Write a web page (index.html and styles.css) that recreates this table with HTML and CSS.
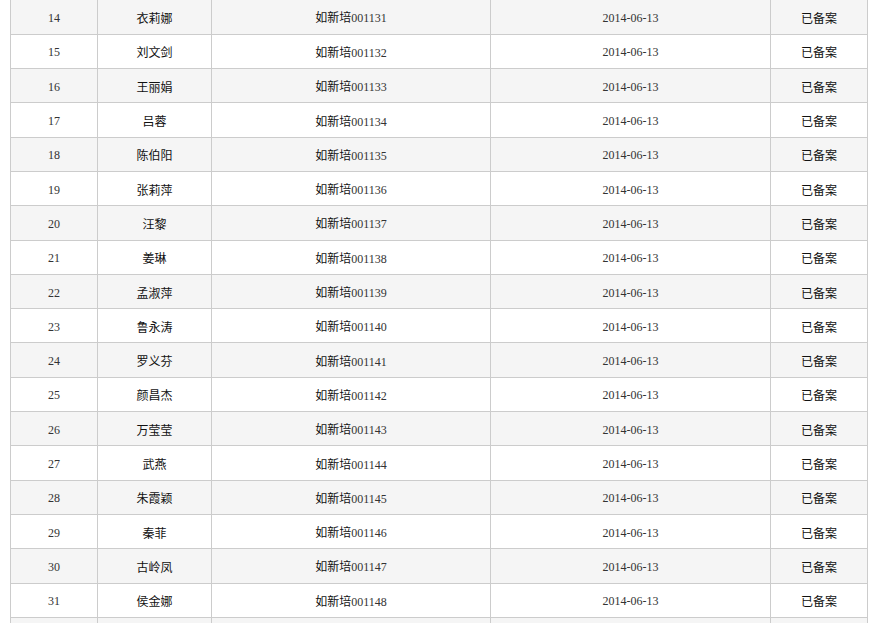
FILE: index.html
```html
<!DOCTYPE html>
<html lang="zh-CN">
<head>
<meta charset="utf-8">
<title>备案列表</title>
<link rel="stylesheet" href="styles.css">
</head>
<body>
<div class="wrap">
<table class="list">
<colgroup>
<col class="c-no"><col class="c-name"><col class="c-code"><col class="c-date"><col class="c-state">
</colgroup>
<tbody>
<tr class="odd"><td>14</td><td class="cn">衣莉娜</td><td><span class="cn">如新培</span>001131</td><td>2014-06-13</td><td class="cn">已备案</td></tr>
<tr><td>15</td><td class="cn">刘文剑</td><td><span class="cn">如新培</span>001132</td><td>2014-06-13</td><td class="cn">已备案</td></tr>
<tr class="odd"><td>16</td><td class="cn">王丽娟</td><td><span class="cn">如新培</span>001133</td><td>2014-06-13</td><td class="cn">已备案</td></tr>
<tr><td>17</td><td class="cn">吕蓉</td><td><span class="cn">如新培</span>001134</td><td>2014-06-13</td><td class="cn">已备案</td></tr>
<tr class="odd"><td>18</td><td class="cn">陈伯阳</td><td><span class="cn">如新培</span>001135</td><td>2014-06-13</td><td class="cn">已备案</td></tr>
<tr><td>19</td><td class="cn">张莉萍</td><td><span class="cn">如新培</span>001136</td><td>2014-06-13</td><td class="cn">已备案</td></tr>
<tr class="odd"><td>20</td><td class="cn">汪黎</td><td><span class="cn">如新培</span>001137</td><td>2014-06-13</td><td class="cn">已备案</td></tr>
<tr><td>21</td><td class="cn">姜琳</td><td><span class="cn">如新培</span>001138</td><td>2014-06-13</td><td class="cn">已备案</td></tr>
<tr class="odd"><td>22</td><td class="cn">孟淑萍</td><td><span class="cn">如新培</span>001139</td><td>2014-06-13</td><td class="cn">已备案</td></tr>
<tr><td>23</td><td class="cn">鲁永涛</td><td><span class="cn">如新培</span>001140</td><td>2014-06-13</td><td class="cn">已备案</td></tr>
<tr class="odd"><td>24</td><td class="cn">罗义芬</td><td><span class="cn">如新培</span>001141</td><td>2014-06-13</td><td class="cn">已备案</td></tr>
<tr><td>25</td><td class="cn">颜昌杰</td><td><span class="cn">如新培</span>001142</td><td>2014-06-13</td><td class="cn">已备案</td></tr>
<tr class="odd"><td>26</td><td class="cn">万莹莹</td><td><span class="cn">如新培</span>001143</td><td>2014-06-13</td><td class="cn">已备案</td></tr>
<tr><td>27</td><td class="cn">武燕</td><td><span class="cn">如新培</span>001144</td><td>2014-06-13</td><td class="cn">已备案</td></tr>
<tr class="odd"><td>28</td><td class="cn">朱霞颖</td><td><span class="cn">如新培</span>001145</td><td>2014-06-13</td><td class="cn">已备案</td></tr>
<tr><td>29</td><td class="cn">秦菲</td><td><span class="cn">如新培</span>001146</td><td>2014-06-13</td><td class="cn">已备案</td></tr>
<tr class="odd"><td>30</td><td class="cn">古岭凤</td><td><span class="cn">如新培</span>001147</td><td>2014-06-13</td><td class="cn">已备案</td></tr>
<tr><td>31</td><td class="cn">侯金娜</td><td><span class="cn">如新培</span>001148</td><td>2014-06-13</td><td class="cn">已备案</td></tr>
<tr class="odd"><td></td><td></td><td></td><td></td><td></td></tr>
</tbody>
</table>
</div>
</body>
</html>
```

FILE: styles.css
```css
html, body {
  margin: 0;
  padding: 0;
  background: #ffffff;
}

.wrap {
  padding-left: 10px;
  overflow: hidden;
  height: 623px;
}

.list {
  border-collapse: collapse;
  table-layout: fixed;
  width: 857px;
  font-family: "Liberation Serif", "Noto Sans CJK SC", serif;
  font-size: 12px;
  color: #333333;
}

.c-no { width: 87px; }
.c-name { width: 114px; }
.c-code { width: 279px; }
.c-date { width: 280px; }
.c-state { width: 97px; }

.list tr {
  height: 34.3px;
}

.list tr.odd {
  background: #f5f5f5;
}

.list td {
  border: 1px solid #cccccc;
  text-align: center;
  vertical-align: middle;
  padding: 2px 0 0;
  line-height: 16px;
}

.list tr:first-child td {
  border-top: 0;
}

.cn {
  font-family: "Noto Sans CJK SC", sans-serif;
  color: #111111;
}
```
